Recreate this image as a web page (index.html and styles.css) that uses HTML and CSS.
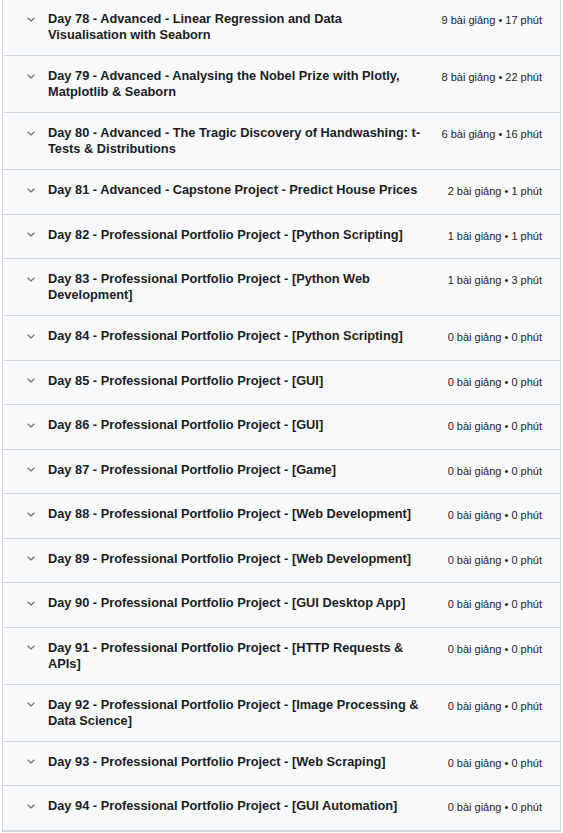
FILE: index.html
```html
<!DOCTYPE html>
<html lang="vi">
<head>
<meta charset="utf-8">
<title>Curriculum</title>
<link rel="stylesheet" href="styles.css">
</head>
<body>
<div class="curriculum">
  <div class="section"><span class="chev"><svg viewBox="0 0 8 5" width="8" height="5"><polyline points="0.6,0.8 4,4 7.4,0.8"/></svg></span><span class="title">Day 78 - Advanced - Linear Regression and Data Visualisation with Seaborn</span><span class="meta">9 bài giảng • 17 phút</span></div>
  <div class="section"><span class="chev"><svg viewBox="0 0 8 5" width="8" height="5"><polyline points="0.6,0.8 4,4 7.4,0.8"/></svg></span><span class="title">Day 79 - Advanced - Analysing the Nobel Prize with Plotly, Matplotlib &amp; Seaborn</span><span class="meta">8 bài giảng • 22 phút</span></div>
  <div class="section"><span class="chev"><svg viewBox="0 0 8 5" width="8" height="5"><polyline points="0.6,0.8 4,4 7.4,0.8"/></svg></span><span class="title">Day 80 - Advanced - The Tragic Discovery of Handwashing: t-Tests &amp; Distributions</span><span class="meta">6 bài giảng • 16 phút</span></div>
  <div class="section"><span class="chev"><svg viewBox="0 0 8 5" width="8" height="5"><polyline points="0.6,0.8 4,4 7.4,0.8"/></svg></span><span class="title">Day 81 - Advanced - Capstone Project - Predict House Prices</span><span class="meta">2 bài giảng • 1 phút</span></div>
  <div class="section"><span class="chev"><svg viewBox="0 0 8 5" width="8" height="5"><polyline points="0.6,0.8 4,4 7.4,0.8"/></svg></span><span class="title">Day 82 - Professional Portfolio Project - [Python Scripting]</span><span class="meta">1 bài giảng • 1 phút</span></div>
  <div class="section"><span class="chev"><svg viewBox="0 0 8 5" width="8" height="5"><polyline points="0.6,0.8 4,4 7.4,0.8"/></svg></span><span class="title">Day 83 - Professional Portfolio Project - [Python Web Development]</span><span class="meta">1 bài giảng • 3 phút</span></div>
  <div class="section"><span class="chev"><svg viewBox="0 0 8 5" width="8" height="5"><polyline points="0.6,0.8 4,4 7.4,0.8"/></svg></span><span class="title">Day 84 - Professional Portfolio Project - [Python Scripting]</span><span class="meta">0 bài giảng • 0 phút</span></div>
  <div class="section"><span class="chev"><svg viewBox="0 0 8 5" width="8" height="5"><polyline points="0.6,0.8 4,4 7.4,0.8"/></svg></span><span class="title">Day 85 - Professional Portfolio Project - [GUI]</span><span class="meta">0 bài giảng • 0 phút</span></div>
  <div class="section"><span class="chev"><svg viewBox="0 0 8 5" width="8" height="5"><polyline points="0.6,0.8 4,4 7.4,0.8"/></svg></span><span class="title">Day 86 - Professional Portfolio Project - [GUI]</span><span class="meta">0 bài giảng • 0 phút</span></div>
  <div class="section"><span class="chev"><svg viewBox="0 0 8 5" width="8" height="5"><polyline points="0.6,0.8 4,4 7.4,0.8"/></svg></span><span class="title">Day 87 - Professional Portfolio Project - [Game]</span><span class="meta">0 bài giảng • 0 phút</span></div>
  <div class="section"><span class="chev"><svg viewBox="0 0 8 5" width="8" height="5"><polyline points="0.6,0.8 4,4 7.4,0.8"/></svg></span><span class="title">Day 88 - Professional Portfolio Project - [Web Development]</span><span class="meta">0 bài giảng • 0 phút</span></div>
  <div class="section"><span class="chev"><svg viewBox="0 0 8 5" width="8" height="5"><polyline points="0.6,0.8 4,4 7.4,0.8"/></svg></span><span class="title">Day 89 - Professional Portfolio Project - [Web Development]</span><span class="meta">0 bài giảng • 0 phút</span></div>
  <div class="section"><span class="chev"><svg viewBox="0 0 8 5" width="8" height="5"><polyline points="0.6,0.8 4,4 7.4,0.8"/></svg></span><span class="title">Day 90 - Professional Portfolio Project - [GUI Desktop App]</span><span class="meta">0 bài giảng • 0 phút</span></div>
  <div class="section"><span class="chev"><svg viewBox="0 0 8 5" width="8" height="5"><polyline points="0.6,0.8 4,4 7.4,0.8"/></svg></span><span class="title">Day 91 - Professional Portfolio Project - [HTTP Requests &amp; APIs]</span><span class="meta">0 bài giảng • 0 phút</span></div>
  <div class="section"><span class="chev"><svg viewBox="0 0 8 5" width="8" height="5"><polyline points="0.6,0.8 4,4 7.4,0.8"/></svg></span><span class="title">Day 92 - Professional Portfolio Project - [Image Processing &amp; Data Science]</span><span class="meta">0 bài giảng • 0 phút</span></div>
  <div class="section"><span class="chev"><svg viewBox="0 0 8 5" width="8" height="5"><polyline points="0.6,0.8 4,4 7.4,0.8"/></svg></span><span class="title">Day 93 - Professional Portfolio Project - [Web Scraping]</span><span class="meta">0 bài giảng • 0 phút</span></div>
  <div class="section"><span class="chev"><svg viewBox="0 0 8 5" width="8" height="5"><polyline points="0.6,0.8 4,4 7.4,0.8"/></svg></span><span class="title">Day 94 - Professional Portfolio Project - [GUI Automation]</span><span class="meta">0 bài giảng • 0 phút</span></div>
</div>
</body>
</html>
```
FILE: styles.css
```css
html, body {
  margin: 0;
  padding: 0;
  background: #ffffff;
}
body {
  font-family: "Liberation Sans", Arial, sans-serif;
  color: #1c1d1f;
}
.curriculum {
  margin: -1px 2px 0 2px;
  border: 1px solid #d1d7dc;
  border-top: none;
  background: #f7f9fa;
}
.section {
  display: flex;
  align-items: flex-start;
  padding: 12px 18px 12px 24px;
  min-height: 19.5px;
  border-bottom: 1px solid #d1d7dc;
}
.chev {
  flex: none;
  width: 21px;
  height: 16px;
  display: flex;
  align-items: center;
}
.chev svg {
  display: block;
  fill: none;
  stroke: #6a6f73;
  stroke-width: 1.2;
}
.title {
  flex: 1;
  font-size: 12.8px;
  font-weight: 700;
  line-height: 16px;
}
.meta {
  flex: none;
  margin-left: 18px;
  font-size: 11px;
  line-height: 16px;
  padding-top: 1px;
  white-space: nowrap;
}
```
